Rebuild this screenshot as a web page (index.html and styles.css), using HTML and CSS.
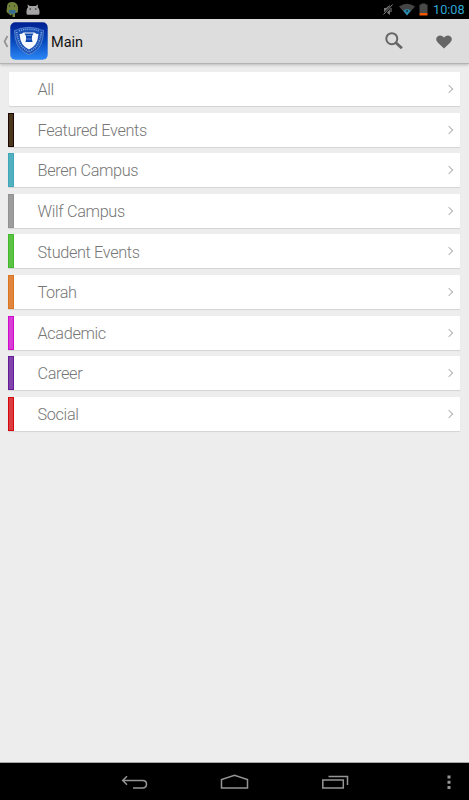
FILE: index.html
```
<!DOCTYPE html>
<html lang="en">
<head>
<meta charset="utf-8">
<title>Main</title>
<link rel="stylesheet" href="styles.css">
</head>
<body>
<div class="status">
  <svg width="60" height="19" viewBox="0 0 60 19">
    <path d="M7 7q0-5 5-5t6 5v4q0 2-3 2v4h-2.500v-3l-2 1.500-2-2q-3-1-1.500-5.500z" fill="#71823b"/>
    <path d="M9 10l6 0 1 3-3 1-4-1z" fill="#356b94"/>
    <path d="M9 6h1M14 6h1" stroke="#222"/>
    <path d="M27.500 4.500l2.500 1.500h5.500l2.500-1.500-.3 2.700q1.800 1.500 1.800 4v2q0 1.500-1.500 1.500H28q-1.500 0-1.500-1.500v-2q0-2.500 1.500-4z" fill="#a4a4a4"/>
    <path d="M29.500 9h1.500M35 9h1.500" stroke="#444" stroke-width="1.500"/>
  </svg>
  <svg class="indicators" width="49" height="19" viewBox="0 0 49 19">
    <path d="M4 8h2l4-3v10l-4-3H4z" fill="#777"/>
    <path d="M3.500 14.500L13 4.500" stroke="#000" stroke-width="2.500"/>
    <path d="M3.500 14.500L12.500 4.500M11 8v4" stroke="#888" stroke-width="1"/>
    <path d="M19 6.500q8-5.500 16 0L27 15.500z" fill="#454545"/>
    <path d="M23.300 10.500q3.700-2.500 7.400 0L27 15.500z" fill="#278cb2"/>
    <circle cx="27" cy="11" r="1.100" fill="#173744"/>
    <path d="M39.500 4.500h2v-1h4v1h2v8.500h-8z" fill="#4a4a4a"/>
    <path d="M39.500 13h8v2.500h-8z" fill="#ef5800"/>
  </svg>
  <span class="clock">10:08</span>
</div>
<header class="bar">
  <svg class="up" width="10" height="44" viewBox="0 0 10 44"><path d="M7.500 17L4.500 22.500 7.500 28" fill="none" stroke="#929292" stroke-width="1.700"/></svg>
  <svg class="logo" width="38" height="38" viewBox="0 0 38 38">
    <defs><linearGradient id="blue" x1="0" y1="0" x2="0" y2="1"><stop offset="0" stop-color="#001f91"/><stop offset=".5" stop-color="#0648bd"/><stop offset="1" stop-color="#2c87f5"/></linearGradient></defs>
    <rect x=".3" y=".3" width="37.400" height="37.400" rx="5" fill="url(#blue)"/>
    <path d="M4.500 8.500Q8 8 10 6.500q9-2.300 18 0Q30 8 33.500 8.500q0 8-2.800 14-3.500 7-11.700 10-8-3-11.700-10Q4.500 16.500 4.500 8.500z" fill="#174eb3" stroke="#86a9e0" stroke-width=".6"/>
    <path d="M6.500 10q1.500 9 4 13 3 4 8.500 7 5.500-3 8.500-7 2.500-4 4-13" fill="none" stroke="#7ea5e3" stroke-width="1.700" stroke-dasharray="1.100 1"/>
    <path d="M9 8.800q10-3 20 0" fill="none" stroke="#7ea5e3" stroke-width="1.600" stroke-dasharray="1.100 1"/>
    <path d="M9.500 12q2.500 0 4-1.500h11q1.500 1.500 4 1.500-.5 6-2.800 10-2.200 3.500-6.700 5.500-4.500-2-6.700-5.500Q10 18 9.500 12z" fill="#f5f8ff"/>
    <path d="M14.500 11.500h9l-1.500 2.500q-.5 2 .5 6h-7q1-4 .5-6z" fill="#0b45ad"/>
    <path d="M16.500 13.500h5M16.500 17h5" stroke="#719ddf" stroke-width=".8"/>
  </svg>
  <h1 class="title">Main</h1>
  <svg width="84" height="44" viewBox="0 0 84 44">
    <circle cx="20.800" cy="19.700" r="5.500" fill="none" stroke="#666" stroke-width="2"/>
    <path d="M24.900 23.700l6 5.600" stroke="#666" stroke-width="2.800"/>
    <path d="M73 29.500l-5.800-5.500q-2.900-3-1.600-5.500 1.100-2.100 3.500-2.100 2.200 0 3.900 2 1.700-2 3.900-2 2.400 0 3.500 2.100 1.300 2.500-1.600 5.500z" fill="#666"/>
  </svg>
</header>
<main class="list">
  <div class="row all"><span class="label">All</span><i class="chevron"></i></div>
  <div class="row featured"><span class="label">Featured Events</span><i class="chevron"></i></div>
  <div class="row beren"><span class="label">Beren Campus</span><i class="chevron"></i></div>
  <div class="row wilf"><span class="label">Wilf Campus</span><i class="chevron"></i></div>
  <div class="row student"><span class="label">Student Events</span><i class="chevron"></i></div>
  <div class="row torah"><span class="label">Torah</span><i class="chevron"></i></div>
  <div class="row academic"><span class="label">Academic</span><i class="chevron"></i></div>
  <div class="row career"><span class="label">Career</span><i class="chevron"></i></div>
  <div class="row social"><span class="label">Social</span><i class="chevron"></i></div>
</main>
<nav class="nav">
  <svg width="469" height="37" viewBox="0 0 469 37" fill="none" stroke="#959595" stroke-width="1.500">
    <path d="M127 13.200L122.700 17.500l4.300 4.300M123 17.500h19.500q4 0 4 3.700t-4 3.800H133"/>
    <path d="M221.500 25V16.500l13-4.300 13 4.300V25z"/>
    <path d="M322.800 17h20.500v8h-20.500zM328.500 13.500h19V22"/>
    <path d="M447.500 12.500h3v3h-3zM447.500 17.700h3v3h-3zM447.500 22.900h3v3h-3z" fill="#959595" stroke="none"/>
  </svg>
</nav>
</body>
</html>
```
FILE: styles.css
```
*, *::before { box-sizing: border-box; }
body {
  margin: 0;
  height: 800px;
  display: flex;
  flex-direction: column;
  overflow: hidden;
  background: #ededed;
  font-family: Roboto, sans-serif;
}
.status {
  height: 19px;
  flex: none;
  display: flex;
  background: #000;
  color: #2fa6d2;
}
.indicators { margin-left: auto; }
.clock {
  width: 37px;
  margin-right: 3px;
  padding-left: 4px;
  font-size: 12.700px;
  line-height: 20px;
  white-space: nowrap;
}
.bar {
  height: 44.500px;
  flex: none;
  display: flex;
  align-items: center;
  background: #ddd;
  border-bottom: 1px solid #b3b3b3;
  box-shadow: 0 1px 3px rgba(0, 0, 0, .22);
}
.logo { margin-top: 1px; }
.title {
  margin: 4px auto 0 3px;
  color: #111;
  font-size: 14.500px;
  font-weight: 400;
  line-height: 20px;
}
.bar svg:last-child { margin-right: 14px; }
.list {
  flex: 1;
  display: flex;
  flex-direction: column;
  gap: 6.600px;
  padding: 8.500px 9px 0 8px;
}
.row {
  --fill: transparent;
  --edge: transparent;
  height: 34px;
  display: flex;
  align-items: center;
  padding-right: 7px;
  background: #fff;
  border-radius: 1px;
  box-shadow: 0 1px 1px rgba(0, 0, 0, .11);
}
.row::before {
  content: "";
  width: 6px;
  height: 100%;
  background: var(--fill);
  border: 1px solid var(--edge);
}
.label {
  margin: 2.600px auto 0 23.500px;
  color: #777;
  font-size: 16.300px;
  font-weight: 300;
  letter-spacing: -.36px;
  line-height: 20px;
}
.chevron {
  width: 6px;
  height: 6px;
  margin-right: 1px;
  border-top: 1px solid #b4b4b4;
  border-right: 1px solid #b4b4b4;
  transform: rotate(45deg);
}
.all { margin-left: 1px; }
.all .label { margin-left: 22.500px; }
.featured { --fill: #4b371e; --edge: #1e0905; }
.beren { --fill: #53b0c0; --edge: #40a7b9; }
.wilf { --fill: #9d9d9d; --edge: #929292; }
.student { --fill: #5bc246; --edge: #43b92c; }
.torah { --fill: #e0863f; --edge: #dd7420; }
.academic { --fill: #d83ed5; --edge: #ce0bca; }
.career { --fill: #8044aa; --edge: #651b98; }
.social { --fill: #dc3d41; --edge: #d4090e; }
.nav {
  height: 37px;
  flex: none;
  background: #000;
  box-shadow: 0 -1px #a9a9a9;
}
.nav svg { display: block; }
```
